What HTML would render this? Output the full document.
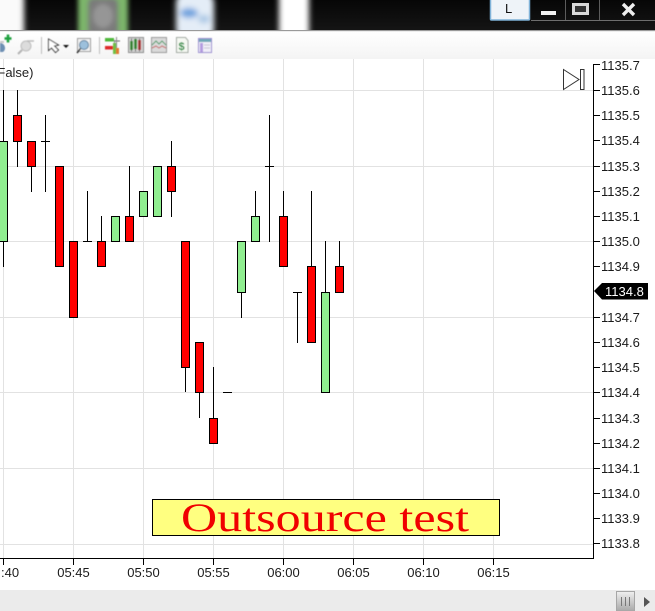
<!DOCTYPE html>
<html><head><meta charset="utf-8">
<style>
html,body{margin:0;padding:0;background:#fff}
body{width:655px;height:611px;overflow:hidden}
svg{display:block}
</style></head><body>
<svg width="655" height="611" viewBox="0 0 655 611" xmlns="http://www.w3.org/2000/svg">
<defs>
<filter id="b" x="-30%" y="-30%" width="160%" height="160%"><feGaussianBlur stdDeviation="3"/></filter>
<filter id="b2" x="-30%" y="-30%" width="160%" height="160%"><feGaussianBlur stdDeviation="2.500"/></filter>
<filter id="s" x="-10%" y="-10%" width="120%" height="120%"><feGaussianBlur stdDeviation="0.45"/></filter>
<linearGradient id="tb" x1="0" y1="0" x2="0" y2="1"><stop offset="0" stop-color="#fff"/><stop offset="1" stop-color="#f4f4f4"/></linearGradient>
<linearGradient id="th" x1="0" y1="0" x2="0" y2="1"><stop offset="0" stop-color="#f0f0f0"/><stop offset="1" stop-color="#a8a8a8"/></linearGradient>
<linearGradient id="top" x1="0" y1="0" x2="0" y2="1"><stop offset="0" stop-color="#060606"/><stop offset="1" stop-color="#151515"/></linearGradient>
</defs>
<rect width="655" height="611" fill="#fff"/>

<!-- title bar -->
<rect width="655" height="31" fill="url(#top)"/>
<svg x="0" y="0" width="655" height="30">
<g filter="url(#b)">
<rect x="-12" y="-10" width="36" height="50" rx="8" fill="#fafafa"/>
<rect x="279" y="-10" width="30" height="50" rx="6" fill="#fff"/>
<rect x="176" y="-8" width="38" height="48" rx="11" fill="#e4edf7"/>
<ellipse cx="189" cy="13" rx="9" ry="5" fill="#6ea2de"/>
<ellipse cx="204" cy="19" rx="6" ry="4" fill="#a8c6e4"/>
</g>
<g filter="url(#b2)">
<rect x="78" y="-6" width="50" height="44" fill="#7cb56a"/>
<rect x="88" y="-2" width="30" height="40" rx="5" fill="#7a7a7a"/>
<ellipse cx="103" cy="16" rx="10" ry="12" fill="#969696"/>
</g>
</svg>
<rect x="0" y="30" width="655" height="1" fill="#9a9a9a"/>
<rect x="0" y="31" width="655" height="1" fill="#eee"/>
<!-- window controls -->
<rect x="490.500" y="-3" width="39" height="23" rx="1" fill="#eef3f8" stroke="#7fb2d8" stroke-width="1.500"/>
<text x="505" y="13" font-family="Liberation Sans, sans-serif" font-size="13" fill="#111">L</text>
<path d="M531 20.500L655 20.500" stroke="#6e6e6e" stroke-width="1"/>
<path d="M565.500 0V20M599.500 0V20" stroke="#5c5c5c" stroke-width="1"/>
<rect x="541" y="11" width="15" height="4" fill="#f2f2f2"/>
<rect x="573.500" y="4.500" width="14" height="9" fill="#333" stroke="#d8d8d8" stroke-width="3"/>
<path d="M623 4L634 15M634 4L623 15" stroke="#eee" stroke-width="3.400"/>

<!-- toolbar -->
<rect x="0" y="32" width="655" height="27" fill="url(#tb)"/>
<g filter="url(#s)">
<path d="M0 43a5 5 0 0 1 3 9h-3z" fill="#6d8fb3"/>
<path d="M0 41h4v2h-4z" fill="#c8c8c8"/>
<path d="M8 34.500v8M4.500 38.500h7" stroke="#1ca03c" stroke-width="2.500"/>
<circle cx="26" cy="46" r="5" fill="#dcdcdc" stroke="#bdbdbd"/>
<path d="M22 50l-4 4" stroke="#b4b4b4" stroke-width="2"/>
<path d="M27 41h7" stroke="#bbb" stroke-width="1.500"/>
<path d="M41.500 37v17M99.500 37v17" stroke="#bcbcbc"/>
<path d="M48.500 39l0 11.500 3-2.500 4 4.500 3-2.500-4-4 4-1z" fill="#fff" stroke="#333"/>
<path d="M63 45h6l-3 3z" fill="#111"/>
<rect x="77.500" y="38.500" width="13" height="13" fill="#f3f3f3" stroke="#999"/>
<circle cx="84" cy="45" r="4.500" fill="#9cc0dc" stroke="#5d7f9c"/>
<path d="M80.500 48.500l-3.500 4.500" stroke="#333" stroke-width="1.500"/>
<rect x="105" y="38" width="9" height="3.500" fill="#4fb83a"/>
<rect x="105" y="46" width="9" height="3.500" fill="#de2a2a"/>
<path d="M114 41h6" stroke="#666"/>
<path d="M114.500 40v14M116.500 37v17" stroke="#888"/>
<rect x="116" y="48" width="3" height="6" fill="#e07a30"/>
<rect x="113" y="43" width="3" height="11" fill="#6fbf45"/>
<rect x="128.500" y="37.500" width="15" height="15" fill="#d2d2d2" stroke="#8c8c8c"/>
<rect x="130" y="41" width="3" height="9" fill="#3fa83a"/>
<rect x="134" y="39" width="3" height="10" fill="#3fa83a"/>
<rect x="138" y="40" width="3" height="10" fill="#c93a3a"/>
<path d="M131.500 38.500v13M135.500 38.500v13M139.500 38.500v13" stroke="#333" stroke-width=".7"/>
<rect x="151.500" y="37.500" width="15" height="15" fill="#dadada" stroke="#999"/>
<path d="M152 45l4-4 3 3 3-3 4 4" fill="none" stroke="#4f9c6a"/>
<path d="M152 48l4-2 3 2 3-2 4 2" fill="none" stroke="#c86a6a"/>
<path d="M176.500 37.500h9l2.500 3v12h-11.500z" fill="#f5f8f2" stroke="#a0a8a0"/>
<text x="178.500" y="50" font-family="Liberation Sans, sans-serif" font-size="11" font-weight="bold" fill="#1f8a3a">$</text>
<rect x="198.500" y="38.500" width="13" height="14" fill="#f0eef8" stroke="#9b8fd0"/>
<rect x="199" y="39" width="12" height="3" fill="#70a8b8"/>
<rect x="200" y="43" width="3" height="9" fill="#b49be0"/>
<path d="M204 45h6M204 48h6" stroke="#c4c4d0"/>
</g>

<!-- grid -->
<g stroke="#e2e2e2" stroke-width="1" shape-rendering="crispEdges">
<path d="M0 90.500H593M0 166.500H593M0 241.500H593M0 317.500H593M0 392.500H593M0 468.500H593M0 544.500H593"/>
<path d="M3.500 59V558M73.500 59V558M143.500 59V558M213.500 59V558M283.500 59V558M353.500 59V558M423.500 59V558M493.500 59V558"/>
</g>

<text x="33.500" y="77" text-anchor="end" font-family="Liberation Sans, sans-serif" font-size="13" fill="#222">False)</text>

<!-- wicks -->
<g stroke="#000" stroke-width="1" shape-rendering="crispEdges" fill="none">
<path d="M3.500 90V267M17.500 90V167M31.500 141V192M45.500 115V192M41 141.500H50M87.500 191V242M83 241.500H92M101.500 216V242M129.500 166V216M171.500 141V217M185.500 241V392M199.500 342V418M213.500 367V418M223 392.500H232M241.500 292V318M255.500 191V216M269.500 115V242M265 166.500H274M283.500 191V216M297.500 292V343M293 292.500H302M311.500 191V267M325.500 241V292M339.500 241V267"/>
</g>
<!-- bodies -->
<g stroke="#000" stroke-width="1" shape-rendering="crispEdges">
<g fill="#90ee90">
<rect x="-0.500" y="141.500" width="8" height="100"/>
<rect x="111.500" y="216.500" width="8" height="25"/>
<rect x="139.500" y="191.500" width="8" height="25"/>
<rect x="153.500" y="166.500" width="8" height="50"/>
<rect x="237.500" y="241.500" width="8" height="51"/>
<rect x="251.500" y="216.500" width="8" height="25"/>
<rect x="321.500" y="292.500" width="8" height="100"/>
</g>
<g fill="#ff0000">
<rect x="13.500" y="115.500" width="8" height="26"/>
<rect x="27.500" y="141.500" width="8" height="25"/>
<rect x="55.500" y="166.500" width="8" height="100"/>
<rect x="69.500" y="241.500" width="8" height="76"/>
<rect x="97.500" y="241.500" width="8" height="25"/>
<rect x="125.500" y="216.500" width="8" height="25"/>
<rect x="167.500" y="166.500" width="8" height="25"/>
<rect x="181.500" y="241.500" width="8" height="126"/>
<rect x="195.500" y="342.500" width="8" height="50"/>
<rect x="209.500" y="418.500" width="8" height="25"/>
<rect x="279.500" y="216.500" width="8" height="50"/>
<rect x="307.500" y="266.500" width="8" height="76"/>
<rect x="335.500" y="266.500" width="8" height="26"/>
</g>
</g>

<!-- go to end icon -->
<path d="M563.500 69.500L579 79.500L563.500 89.500Z" fill="none" stroke="#333" stroke-width="1"/>
<rect x="580.500" y="69.500" width="3.500" height="20" fill="none" stroke="#333" stroke-width="1"/>

<!-- outsource box -->
<rect x="152.500" y="499.500" width="347" height="36" fill="#ffff80" stroke="#000" stroke-width="1" shape-rendering="crispEdges"/>
<text x="181" y="531" font-family="Liberation Serif, serif" font-size="40" fill="#f00000" textLength="288" lengthAdjust="spacingAndGlyphs">Outsource test</text>

<!-- axes -->
<g stroke="#000" stroke-width="1" shape-rendering="crispEdges" fill="none">
<path d="M593.500 64V559M0 558.500H594"/>
<path d="M593 64.500H600M593 90.500H600M593 115.500H600M593 140.500H600M593 166.500H600M593 191.500H600M593 216.500H600M593 241.500H600M593 266.500H600M593 317.500H600M593 342.500H600M593 367.500H600M593 392.500H600M593 418.500H600M593 443.500H600M593 468.500H600M593 493.500H600M593 518.500H600M593 543.500H600"/>
<path d="M3.500 558V565M73.500 558V565M143.500 558V565M213.500 558V565M283.500 558V565M353.500 558V565M423.500 558V565M493.500 558V565"/>
</g>
<g font-family="Liberation Sans, sans-serif" font-size="13" fill="#1a1a1a">
<text x="601" y="70">1135.7</text>
<text x="601" y="95">1135.6</text>
<text x="601" y="120">1135.5</text>
<text x="601" y="145">1135.4</text>
<text x="601" y="171">1135.3</text>
<text x="601" y="196">1135.2</text>
<text x="601" y="221">1135.1</text>
<text x="601" y="246">1135.0</text>
<text x="601" y="271">1134.9</text>
<text x="601" y="322">1134.7</text>
<text x="601" y="347">1134.6</text>
<text x="601" y="372">1134.5</text>
<text x="601" y="397">1134.4</text>
<text x="601" y="423">1134.3</text>
<text x="601" y="448">1134.2</text>
<text x="601" y="473">1134.1</text>
<text x="601" y="498">1134.0</text>
<text x="601" y="523">1133.9</text>
<text x="601" y="548">1133.8</text>
<text x="1" y="577">:40</text>
<g text-anchor="middle">
<text x="73.500" y="577">05:45</text>
<text x="143.500" y="577">05:50</text>
<text x="213.500" y="577">05:55</text>
<text x="283.500" y="577">06:00</text>
<text x="353.500" y="577">06:05</text>
<text x="423.500" y="577">06:10</text>
<text x="493.500" y="577">06:15</text>
</g>
</g>

<!-- price tag -->
<path d="M594 291L602 283H648V299.500H602Z" fill="#000"/>
<text x="605" y="296" font-family="Liberation Sans, sans-serif" font-size="13" fill="#fff">1134.8</text>

<!-- scroll bar -->
<rect x="0" y="590" width="655" height="21" fill="#ebebeb"/>
<rect x="616.500" y="591.500" width="18" height="19.500" fill="url(#th)" stroke="#a6a6a6"/>
<path d="M621.500 597v9M625.500 597v9M629.500 597v9" stroke="#777" stroke-width="1"/>
<path d="M644 597l6 5-6 5z" fill="#555"/>
</svg>
</body></html>
